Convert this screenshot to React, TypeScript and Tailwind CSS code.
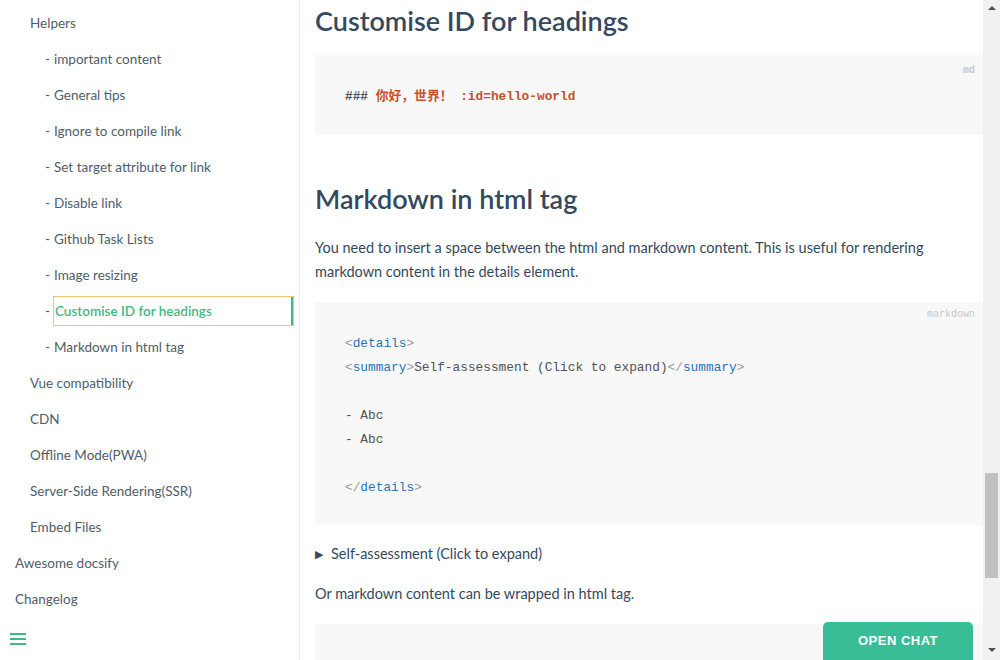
import React from 'react';

const sans = { fontFamily: '"Source Sans Pro", "Lato", "Noto Sans", sans-serif' };
const mono = { fontFamily: '"Liberation Mono", "Noto Sans CJK SC", monospace' };

type NavItem = { label: string; level: 0 | 1 | 2; active?: boolean };

const nav: NavItem[] = [
  { label: 'Helpers', level: 1 },
  { label: 'important content', level: 2 },
  { label: 'General tips', level: 2 },
  { label: 'Ignore to compile link', level: 2 },
  { label: 'Set target attribute for link', level: 2 },
  { label: 'Disable link', level: 2 },
  { label: 'Github Task Lists', level: 2 },
  { label: 'Image resizing', level: 2 },
  { label: 'Customise ID for headings', level: 2, active: true },
  { label: 'Markdown in html tag', level: 2 },
  { label: 'Vue compatibility', level: 1 },
  { label: 'CDN', level: 1 },
  { label: 'Offline Mode(PWA)', level: 1 },
  { label: 'Server-Side Rendering(SSR)', level: 1 },
  { label: 'Embed Files', level: 1 },
  { label: 'Awesome docsify', level: 0 },
  { label: 'Changelog', level: 0 },
];

const Sidebar = () => (
  <aside className="relative w-[300px] shrink-0 border-r border-[#eee] bg-white pt-[5px]" style={sans}>
    <ul className="text-[13.5px] text-[#505d6b]">
      {nav.map((item) => (
        <li key={item.label} className="flex h-9 items-center">
          {item.level === 0 && <span className="pl-[15px]">{item.label}</span>}
          {item.level === 1 && <span className="pl-[30px]">{item.label}</span>}
          {item.level === 2 && (
            <>
              <span className="w-[54px] shrink-0 pl-[45px]">-</span>
              {item.active ? (
                <span className="-ml-px mr-[5px] flex h-[30px] flex-1 items-center border border-[#f0c36d] pl-px font-semibold text-[#42b983]">
                  <span className="flex-1">{item.label}</span>
                  <span className="h-full w-[2px] bg-[#42b983]" />
                </span>
              ) : (
                <span>{item.label}</span>
              )}
            </>
          )}
        </li>
      ))}
    </ul>
    <div className="absolute bottom-[15px] left-[10px] flex flex-col gap-[3px]">
      <span className="block h-[2px] w-4 bg-[#42b983]" />
      <span className="block h-[2px] w-4 bg-[#42b983]" />
      <span className="block h-[2px] w-4 bg-[#42b983]" />
    </div>
  </aside>
);

const Tag = ({ name, close }: { name: string; close?: boolean }) => (
  <>
    <span className="text-[#999]">{close ? '</' : '<'}</span>
    <span className="text-[#2973b7]">{name}</span>
    <span className="text-[#999]">&gt;</span>
  </>
);

const Content = () => (
  <main className="flex-1 overflow-hidden pl-[15px] text-[#34495e]" style={sans}>
    <h2 className="flex h-10 items-center text-[27px] font-semibold leading-none">Customise ID for headings</h2>
    <div className="relative mt-[15px] h-[80px] bg-[#f8f8f8] pl-[30px] pt-[32px] text-[12.8px] leading-[20px]" style={mono}>
      <span className="absolute right-[8px] top-[6px] text-[10px] font-semibold text-[#c8c8c8]">md</span>
      <span className="font-bold text-[#525252]">### </span>
      <span className="font-bold text-[#c8502a]">你好，世界！ :id=hello-world</span>
    </div>
    <h2 className="mt-[45px] flex h-9 items-center text-[27px] font-semibold leading-none">Markdown in html tag</h2>
    <p className="mt-[20px] w-[640px] text-[14.5px] leading-[24px]">
      You need to insert a space between the html and markdown content. This is useful for rendering markdown content in the details element.
    </p>
    <div className="relative mt-[18px] h-[223px] bg-[#f8f8f8] pl-[30px] pt-[30px] text-[12.8px] leading-[24px] text-[#525252]" style={mono}>
      <span className="absolute right-[8px] top-[6px] text-[10px] leading-[14px] text-[#c8c8c8]">markdown</span>
      <div><Tag name="details" /></div>
      <div><Tag name="summary" />Self-assessment (Click to expand)<Tag name="summary" close /></div>
      <div>&nbsp;</div>
      <div>- Abc</div>
      <div>- Abc</div>
      <div>&nbsp;</div>
      <div><Tag name="details" close /></div>
    </div>
    <div className="mt-[17px] flex h-6 items-center gap-[8px] text-[14.5px]">
      <span className="text-[11px] text-[#34495e]">▶</span>
      <span>Self-assessment (Click to expand)</span>
    </div>
    <p className="mt-[16px] text-[14.5px] leading-[24px]">Or markdown content can be wrapped in html tag.</p>
    <div className="mt-[18px] h-[60px] bg-[#f8f8f8]" />
  </main>
);

const Scrollbar = () => (
  <div className="flex w-[17px] shrink-0 flex-col items-center bg-[#f1f1f1]">
    <div className="mt-[6px] h-0 w-0 border-x-[4px] border-b-[4px] border-x-transparent border-b-[#505050]" />
    <div className="mt-[463px] h-[105px] w-[13px] bg-[#c1c1c1]" />
    <div className="mt-[70px] h-0 w-0 border-x-[4px] border-t-[4px] border-x-transparent border-t-[#505050]" />
  </div>
);

export default function App() {
  return (
    <div className="relative flex h-[660px] w-[1000px] overflow-hidden bg-white">
      <Sidebar />
      <Content />
      <Scrollbar />
      <button
        className="absolute bottom-0 left-[823px] h-[38px] w-[150px] rounded-t-[5px] bg-[#38bd97] text-[13px] font-bold tracking-[0.5px] text-white"
        style={{ fontFamily: '"Liberation Sans", Arial, sans-serif' }}
      >
        OPEN CHAT
      </button>
    </div>
  );
}
